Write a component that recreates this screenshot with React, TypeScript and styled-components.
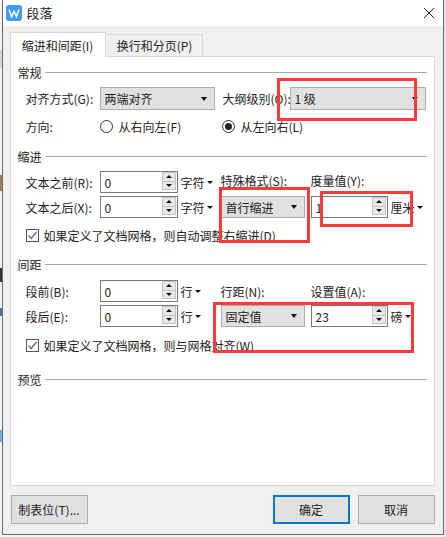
import styled, { createGlobalStyle } from 'styled-components';

const GlobalStyle = createGlobalStyle`
  html, body {
    margin: 0;
    padding: 0;
    background: #f4f4f4;
  }
  body {
    width: 446px;
    height: 537px;
    overflow: hidden;
    font-family: "Noto Sans CJK SC", "Noto Sans", sans-serif;
    font-size: 12px;
    color: #222;
  }
`;

const Desktop = styled.div`
  position: relative;
  width: 446px;
  height: 537px;
  overflow: hidden;
`;

const Dialog = styled.div`
  margin-left: 2px;
  width: 442px;
  height: 535px;
  box-sizing: border-box;
  border: solid #6a6a6a;
  border-width: 0 1.5px 1.5px 1.5px;
  background: #f0f0f0;
  display: flex;
  flex-direction: column;
`;

const TitleBar = styled.div`
  height: 26px;
  background: #fff;
  display: flex;
  align-items: center;
  padding: 0 8px 0 2.5px;
  gap: 5px;
`;

const TitleText = styled.span`
  font-size: 13px;
  flex: 1;
  margin-bottom: 2px;
`;

const Body = styled.div`
  flex: 1;
  display: flex;
  flex-direction: column;
  padding: 7px 8.5px 0 6.5px;
`;

const Tabs = styled.div`
  display: flex;
  height: 24px;
  align-items: flex-end;
  margin-bottom: -1px;
`;

const Tab = styled.div<{ $active?: boolean }>`
  box-sizing: border-box;
  height: ${(p) => (p.$active ? 25 : 23)}px;
  width: ${(p) => (p.$active ? 96 : 97)}px;
  padding-left: ${(p) => (p.$active ? 0 : 2)}px;
  border: 1px solid #d9d9d9;
  border-bottom: ${(p) => (p.$active ? 'none' : '1px solid #d9d9d9')};
  border-left: ${(p) => (p.$active ? '1px solid #d9d9d9' : 'none')};
  background: ${(p) => (p.$active ? '#fff' : '#f0f0f0')};
  position: relative;
  z-index: ${(p) => (p.$active ? 1 : 0)};
  display: flex;
  align-items: center;
  justify-content: center;
  white-space: nowrap;
`;

const Panel = styled.div`
  box-sizing: border-box;
  height: 430px;
  background: #fff;
  border: 1px solid #d9d9d9;
  padding: 7px 7px 0;
`;

const Legend = styled.div<{ $top?: number }>`
  display: flex;
  align-items: center;
  gap: 3px;
  height: 16px;
  margin-top: ${(p) => p.$top ?? 0}px;
  &::after {
    content: '';
    flex: 1;
    height: 1px;
    background: #a8a8a8;
  }
`;

const FlexRow = styled.div<{ $top: number; $height: number }>`
  display: flex;
  align-items: center;
  margin: ${(p) => p.$top}px 0 0 8px;
  height: ${(p) => p.$height}px;
  white-space: nowrap;
`;

const FieldGrid = styled.div<{ $top: number }>`
  display: grid;
  grid-template-columns: 74px 78px 43px 84px 6px 77px auto;
  grid-auto-rows: 22px;
  row-gap: 3px;
  align-items: center;
  margin: ${(p) => p.$top}px 0 0 8px;
  white-space: nowrap;
`;

const Label = styled.span<{ $width?: number; $left?: number }>`
  display: inline-block;
  width: ${(p) => (p.$width ? `${p.$width}px` : 'auto')};
  margin-left: ${(p) => p.$left ?? 0}px;
`;

const Gap = styled.span``;

const ColumnLabel = styled.span<{ $lift?: number }>`
  position: relative;
  top: ${(p) => -(p.$lift ?? 0)}px;
`;

const SelectBox = styled.div<{ $width?: number; $height?: number }>`
  box-sizing: border-box;
  width: ${(p) => (p.$width ? `${p.$width}px` : '100%')};
  height: ${(p) => p.$height ?? 23}px;
  background: #e1e1e1;
  border: 1px solid #adadad;
  display: flex;
  align-items: center;
  justify-content: space-between;
  padding: 0 7px 0 4px;
`;

const Caret = styled.span<{ $small?: boolean }>`
  display: inline-block;
  width: 0;
  height: 0;
  border-style: solid;
  border-color: #111 transparent transparent;
  border-width: ${(p) => (p.$small ? '3px 3px 0' : '4px 3.5px 0')};
`;

const SpinBox = styled.div`
  box-sizing: border-box;
  height: 22px;
  border: 1px solid #7a7a7a;
  background: #fff;
  display: flex;
  align-items: center;
  justify-content: space-between;
  padding: 0 1px 0 4px;
`;

const SpinStack = styled.div`
  display: flex;
  flex-direction: column;
  width: 14px;
  height: 18px;
  margin-bottom: 2px;
`;

const SpinButton = styled.div<{ $down?: boolean }>`
  flex: 1;
  box-sizing: border-box;
  background: #e8e8e8;
  border: 1px solid #c4c4c4;
  margin-top: ${(p) => (p.$down ? -1 : 0)}px;
  display: flex;
  align-items: center;
  justify-content: center;
  &::after {
    content: '';
    width: 0;
    height: 0;
    border-style: solid;
    border-color: ${(p) =>
      p.$down ? '#111 transparent transparent' : 'transparent transparent #111'};
    border-width: ${(p) => (p.$down ? '3px 3px 0' : '0 3px 3px')};
  }
`;

const Unit = styled.span`
  display: inline-flex;
  align-items: center;
  gap: 2px;
  padding-left: 3px;
`;

const Radio = styled.span<{ $checked?: boolean }>`
  box-sizing: border-box;
  width: 13px;
  height: 13px;
  border-radius: 50%;
  border: 1px solid #333;
  background: #fff;
  margin-right: 6px;
  display: inline-flex;
  align-items: center;
  justify-content: center;
  &::after {
    content: '';
    width: 7px;
    height: 7px;
    border-radius: 50%;
    background: ${(p) => (p.$checked ? '#222' : 'transparent')};
  }
`;

const CheckBox = styled.span`
  box-sizing: border-box;
  width: 13px;
  height: 13px;
  border: 1px solid #555;
  background: #fff;
  margin-right: 5px;
  display: inline-flex;
  align-items: center;
  justify-content: center;
`;

const Footer = styled.div`
  box-sizing: border-box;
  display: flex;
  justify-content: space-between;
  margin-top: 9px;
  padding-left: 1px;
  width: 425px;
`;

const ButtonGroup = styled.div`
  display: flex;
  gap: 8px;
`;

const Button = styled.div<{ $primary?: boolean }>`
  box-sizing: border-box;
  width: 77px;
  height: 29px;
  background: #e1e1e1;
  border: ${(p) => (p.$primary ? '2px solid #0078d7' : '1px solid #adadad')};
  display: flex;
  align-items: center;
  justify-content: center;
`;

const Highlight = styled.div<{ $x: number; $y: number; $w: number; $h: number }>`
  position: absolute;
  box-sizing: border-box;
  left: ${(p) => p.$x}px;
  top: ${(p) => p.$y}px;
  width: ${(p) => p.$w}px;
  height: ${(p) => p.$h}px;
  border: 3px solid #fb3b3b;
`;

const Speck = styled.div<{ $y: number; $h: number; $color: string; $right?: boolean }>`
  position: absolute;
  ${(p) => (p.$right ? 'right: 0;' : 'left: 0;')}
  top: ${(p) => p.$y}px;
  width: 2px;
  height: ${(p) => p.$h}px;
  background: ${(p) => p.$color};
`;

const AppIcon = () => (
  <svg width="16" height="16" viewBox="0 0 16 16">
    <rect width="16" height="16" rx="3" fill="#3f9bf6" />
    <path d="M3 4.5 L5.6 11.5 L8 6.5 L10.4 11.5 L13 4.5" fill="none" stroke="#fff" strokeWidth="1.5" />
  </svg>
);

const CloseIcon = () => (
  <svg width="12" height="12" viewBox="0 0 12 12">
    <path d="M1 1 L11 11 M11 1 L1 11" stroke="#222" strokeWidth="1" />
  </svg>
);

const CheckMark = () => (
  <svg width="11" height="11" viewBox="0 0 11 11">
    <path d="M1.5 5.5 L4.2 8.5 L9.5 2" fill="none" stroke="#666" strokeWidth="1.2" />
  </svg>
);

const Select = ({ value, width, height }: { value: string; width?: number; height?: number }) => (
  <SelectBox $width={width} $height={height}>
    <span>{value}</span>
    <Caret />
  </SelectBox>
);

const Spin = ({ value }: { value: string }) => (
  <SpinBox>
    <span>{value}</span>
    <SpinStack>
      <SpinButton />
      <SpinButton $down />
    </SpinStack>
  </SpinBox>
);

const UnitLabel = ({ text }: { text: string }) => (
  <Unit>
    {text}
    <Caret $small />
  </Unit>
);

const App = () => {
  return (
    <Desktop>
      <GlobalStyle />
      <Dialog>
        <TitleBar>
          <AppIcon />
          <TitleText>段落</TitleText>
          <CloseIcon />
        </TitleBar>
        <Body>
          <Tabs>
            <Tab $active>缩进和间距(I)</Tab>
            <Tab>换行和分页(P)</Tab>
          </Tabs>
          <Panel>
            <Legend>常规</Legend>
            <FlexRow $top={7} $height={23}>
              <Label $width={74}>对齐方式(G):</Label>
              <Select value="两端对齐" width={115} />
              <Label $width={67} $left={8}>大纲级别(O):</Label>
              <Select value="1 级" width={136} />
            </FlexRow>
            <FlexRow $top={8} $height={16}>
              <Label $width={74}>方向:</Label>
              <Radio />
              <Label $width={103}>从右向左(F)</Label>
              <Radio $checked />
              <span>从左向右(L)</span>
            </FlexRow>

            <Legend $top={14}>缩进</Legend>
            <FieldGrid $top={7}>
              <span>文本之前(R):</span>
              <Spin value="0" />
              <UnitLabel text="字符" />
              <ColumnLabel $lift={2}>特殊格式(S):</ColumnLabel>
              <Gap />
              <ColumnLabel $lift={2}>度量值(Y):</ColumnLabel>
              <Gap />
              <span>文本之后(X):</span>
              <Spin value="0" />
              <UnitLabel text="字符" />
              <Select value="首行缩进" height={22} />
              <Gap />
              <Spin value="1" />
              <UnitLabel text="厘米" />
            </FieldGrid>
            <FlexRow $top={10} $height={14}>
              <CheckBox>
                <CheckMark />
              </CheckBox>
              <span>如果定义了文档网格，则自动调整右缩进(D)</span>
            </FlexRow>

            <Legend $top={14}>间距</Legend>
            <FieldGrid $top={8}>
              <span>段前(B):</span>
              <Spin value="0" />
              <UnitLabel text="行" />
              <ColumnLabel>行距(N):</ColumnLabel>
              <Gap />
              <ColumnLabel>设置值(A):</ColumnLabel>
              <Gap />
              <span>段后(E):</span>
              <Spin value="0" />
              <UnitLabel text="行" />
              <Select value="固定值" height={22} />
              <Gap />
              <Spin value="23" />
              <UnitLabel text="磅" />
            </FieldGrid>
            <FlexRow $top={11} $height={14}>
              <CheckBox>
                <CheckMark />
              </CheckBox>
              <span>如果定义了文档网格，则与网格对齐(W)</span>
            </FlexRow>

            <Legend $top={19}>预览</Legend>
          </Panel>
          <Footer>
            <Button>制表位(T)...</Button>
            <ButtonGroup>
              <Button $primary>确定</Button>
              <Button>取消</Button>
            </ButtonGroup>
          </Footer>
        </Body>
      </Dialog>

      <Highlight $x={277} $y={78} $w={140} $h={43} />
      <Highlight $x={219} $y={187} $w={91} $h={56} />
      <Highlight $x={320} $y={191} $w={93} $h={36} />
      <Highlight $x={213} $y={302} $w={201} $h={51} />

      <Speck $y={50} $h={18} $color="#d8d8d8" />
      <Speck $y={175} $h={16} $color="#a08050" />
      <Speck $y={268} $h={14} $color="#333" />
      <Speck $y={308} $h={8} $color="#4a6fa0" />
      <Speck $y={430} $h={12} $color="#6ab0e8" />
      <Speck $y={0} $h={537} $color="#e4e4e4" $right />
    </Desktop>
  );
};

export default App;
